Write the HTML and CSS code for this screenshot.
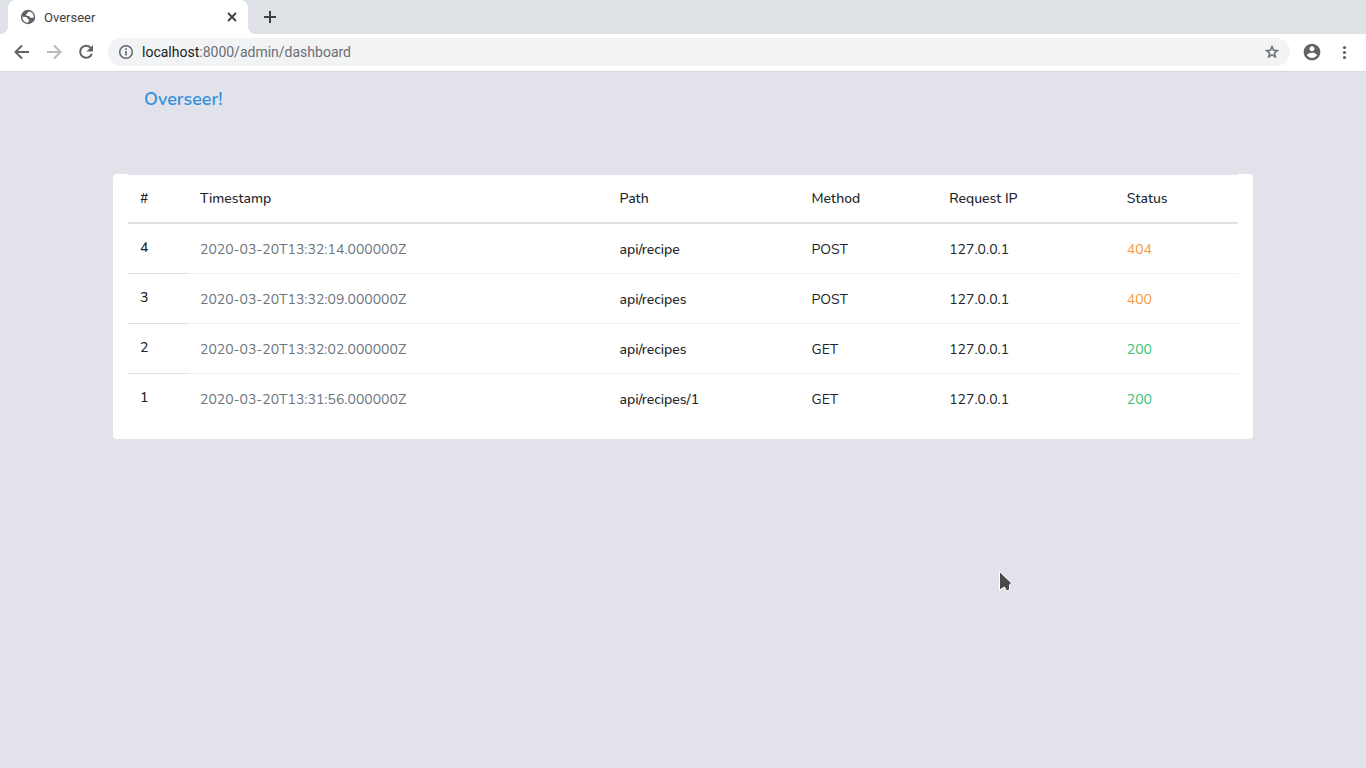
FILE: index.html
```html
<!DOCTYPE html>
<html lang="en">
<head>
<meta charset="utf-8">
<title>Overseer</title>
<link rel="stylesheet" href="styles.css">
</head>
<body>
<header class="browser">
  <div class="tab-strip">
    <div class="tab">
      <svg class="tab-favicon" width="16" height="16" viewBox="0 0 16 16"><circle cx="8" cy="8" r="7.2" fill="#5f6368"/><path d="M9.600 2.400C8 2.600 7.600 3.400 7.700 4.300 6.500 4.300 5.900 5.200 6.300 6.200c.4.900 1.500.7 2.400.8.900.1.900 1.500 1.900 1.800 1 .2 2-.2 3.100-.4.400-2.500-1.300-5.200-4.100-6z" fill="#fff"/><path d="M2.300 7.800c1.700-.2 3.400-.2 4.500.7.900.8.700 1.600 1.900 2 .8.400.7 1.300 0 1.800-.5.400-.4.900-.8 1.500C4.700 13.800 2.200 11 2.300 7.800z" fill="#fff"/></svg>
      <span class="tab-title">Overseer</span>
      <button class="icon-button" type="button" aria-label="Close tab">
        <svg width="16" height="16" viewBox="0 0 16 16" fill="none" stroke="#3c4043" stroke-width="1.800"><path d="M4 4l8 8M12 4l-8 8"/></svg>
      </button>
    </div>
    <button class="icon-button" type="button" aria-label="New tab">
      <svg width="16" height="16" viewBox="0 0 16 16" fill="none" stroke="#3c4043" stroke-width="2"><path d="M8 2v12M2 8h12"/></svg>
    </button>
  </div>
  <div class="toolbar">
    <button class="icon-button" type="button" aria-label="Back">
      <svg width="16" height="16" viewBox="0 0 16 16" fill="none" stroke="#5f6368" stroke-width="2"><path d="M15 8H2.500M8 1.500L1.500 8 8 14.500"/></svg>
    </button>
    <button class="icon-button" type="button" aria-label="Forward">
      <svg width="16" height="16" viewBox="0 0 16 16" fill="none" stroke="#bababa" stroke-width="2"><path d="M1 8h12.500M8 1.500L14.500 8 8 14.500"/></svg>
    </button>
    <button class="icon-button" type="button" aria-label="Reload">
      <svg width="16" height="16" viewBox="0 0 16 16"><path d="M12.700 3.800A6 6 0 1 0 13.800 9.800" fill="none" stroke="#5f6368" stroke-width="2"/><path d="M15 1v6.500H8.500z" fill="#5f6368"/></svg>
    </button>
    <div class="omnibox">
      <svg width="16" height="16" viewBox="0 0 16 16"><circle cx="8" cy="8" r="6.300" fill="none" stroke="#5f6368" stroke-width="1.500"/><path d="M7.200 7h1.600v4.500H7.200zM7.200 4.300h1.600v1.600H7.200z" fill="#5f6368"/></svg>
      <span class="url"><span class="url-host">localhost</span>:8000/admin/dashboard</span>
      <button class="icon-button" type="button" aria-label="Bookmark this page">
        <svg width="16" height="16" viewBox="0 0 24 24"><path d="M22 9.240l-7.190-.620L12 2 9.190 8.630 2 9.240l5.460 4.730L5.820 21 12 17.270 18.180 21l-1.630-7.030L22 9.240zM12 15.400l-3.760 2.270 1-4.280-3.320-2.880 4.380-.380L12 6.100l1.710 4.040 4.380.380-3.320 2.880 1 4.280L12 15.400z" fill="#5f6368" stroke="#5f6368" stroke-width=".6"/></svg>
      </button>
    </div>
    <button class="icon-button" type="button" aria-label="Profile">
      <svg width="20" height="20" viewBox="0 0 24 24"><path d="M12 2C6.480 2 2 6.480 2 12s4.480 10 10 10 10-4.480 10-10S17.520 2 12 2zm0 3c1.660 0 3 1.340 3 3s-1.340 3-3 3-3-1.340-3-3 1.340-3 3-3zm0 14.200c-2.500 0-4.710-1.280-6-3.220.03-1.990 4-3.080 6-3.080 1.990 0 5.970 1.090 6 3.080-1.290 1.940-3.500 3.220-6 3.220z" fill="#5f6368"/></svg>
    </button>
    <button class="icon-button" type="button" aria-label="Menu">
      <svg width="16" height="16" viewBox="0 0 16 16" fill="#5f6368"><circle cx="8.500" cy="3.500" r="1.600"/><circle cx="8.500" cy="8.500" r="1.600"/><circle cx="8.500" cy="13.500" r="1.600"/></svg>
    </button>
  </div>
</header>
<nav class="navbar"><a class="brand" href="#">Overseer!</a></nav>
<main class="card">
  <table class="requests">
    <colgroup><col class="col-id"><col class="col-time"><col class="col-path"><col class="col-method"><col class="col-ip"><col class="col-status"></colgroup>
    <thead>
      <tr><th scope="col">#</th><th scope="col">Timestamp</th><th scope="col">Path</th><th scope="col">Method</th><th scope="col">Request IP</th><th scope="col">Status</th></tr>
    </thead>
    <tbody>
      <tr><th scope="row">4</th><td class="time">2020-03-20T13:32:14.000000Z</td><td class="path">api/recipe</td><td>POST</td><td>127.0.0.1</td><td class="warning">404</td></tr>
      <tr><th scope="row">3</th><td class="time">2020-03-20T13:32:09.000000Z</td><td class="path">api/recipes</td><td>POST</td><td>127.0.0.1</td><td class="warning">400</td></tr>
      <tr><th scope="row">2</th><td class="time">2020-03-20T13:32:02.000000Z</td><td class="path">api/recipes</td><td>GET</td><td>127.0.0.1</td><td class="success">200</td></tr>
      <tr><th scope="row">1</th><td class="time">2020-03-20T13:31:56.000000Z</td><td class="path">api/recipes/1</td><td>GET</td><td>127.0.0.1</td><td class="success">200</td></tr>
    </tbody>
  </table>
</main>
<svg class="pointer" width="16" height="24" viewBox="0 0 16 24"><path d="M1.500 1.500v18.500l5-3 2 4 3-1v-5l2-2z" fill="#4a4a4a" stroke="#fff"/></svg>
</body>
</html>
```
FILE: styles.css
```css
* { box-sizing: border-box; }

body {
  margin: 0;
  min-height: 100vh;
  background: #e2e2eb;
  color: #212529;
  font-family: Nunito, Lato, sans-serif;
  font-size: 14px;
  line-height: 22px;
}

svg { display: block; flex: none; }

.browser {
  font-family: Roboto, sans-serif;
  background: #fff;
  border-bottom: 1px solid #d9dade;
}

.tab-strip {
  display: flex;
  align-items: center;
  gap: 14px;
  height: 34px;
  padding-left: 8px;
  background: #dee1e6;
}

.tab {
  position: relative;
  display: flex;
  align-items: center;
  gap: 8px;
  width: 240px;
  height: 34px;
  padding: 0 8px 0 12px;
  border-radius: 8px 8px 0 0;
  background: #fff;
}

.tab::before,
.tab::after {
  content: "";
  position: absolute;
  bottom: 0;
  width: 8px;
  height: 8px;
}

.tab::before {
  right: 100%;
  background: radial-gradient(circle at 0 0, #dee1e6 8px, #fff 8px);
}

.tab::after {
  left: 100%;
  background: radial-gradient(circle at 100% 0, #dee1e6 8px, #fff 8px);
}

.tab-title {
  flex: 1;
  padding-top: 1px;
  font-size: 13px;
  color: #3c4043;
}

.icon-button {
  padding: 0;
  border: 0;
  background: none;
}

.toolbar {
  display: flex;
  align-items: center;
  gap: 16px;
  padding: 4px 14px 5px;
}

.toolbar > .icon-button:last-child { margin: 0 0 0 -2px; }

.omnibox {
  display: flex;
  flex: 1;
  align-items: center;
  gap: 8px;
  height: 28px;
  margin: 0 -4px 0 -2px;
  padding: 0 10px;
  border-radius: 14px;
  background: #f1f3f4;
}

.url {
  flex: 1;
  color: #6b6f73;
}

.url-host { color: #202124; }

.navbar {
  max-width: 1110px;
  margin: 0 auto 48px;
  padding: 11px 16px;
}

.brand {
  color: #3490dc;
  font-size: 18px;
  font-weight: 600;
  line-height: 32px;
  text-decoration: none;
}

.card {
  max-width: 1140px;
  margin: 0 auto;
  padding: 0 15px 16px;
  border-radius: 4px;
  background: #fff;
}

.requests {
  width: 100%;
  border-spacing: 0;
  table-layout: fixed;
}

.col-id { width: 60px; }
.col-time { width: 37.8%; }
.col-path { width: 17.3%; }
.col-method { width: 12.4%; }
.col-ip { width: 16%; }

th,
td {
  padding: 13px 12px 14px;
  border-top: 1px solid #dee2e6;
  text-align: left;
  vertical-align: top;
}

th { font-weight: 500; }

thead th {
  padding-bottom: 12px;
  border-top-color: #e2e3e9;
  border-bottom: 2px solid #dee2e6;
}

td {
  padding: 15px 12px 12px;
  border-color: #eeeff0;
}

tbody tr:first-child > * { border-top: 0; }

.time { color: #6c757d; }
.path { font-weight: 500; }
.warning { color: #f6993f; }
.success { color: #38c172; }

.pointer {
  position: absolute;
  left: 998px;
  top: 570px;
}
```
